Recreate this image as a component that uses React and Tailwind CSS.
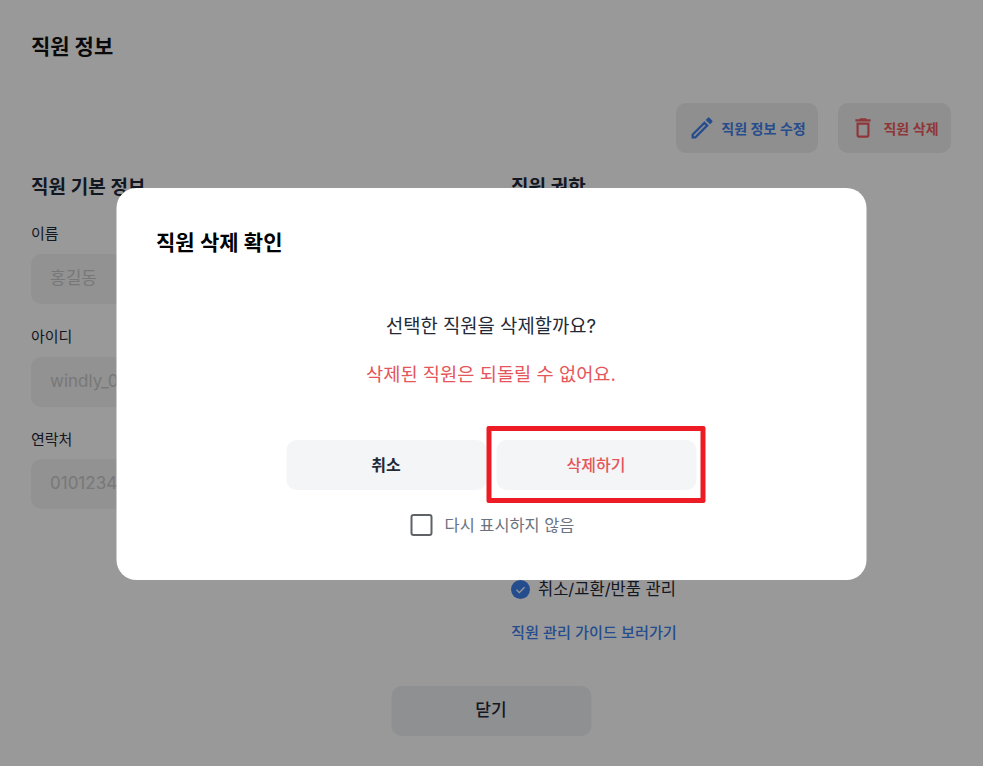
import React from "react";
import { MdOutlineEdit, MdOutlineDelete } from "react-icons/md";

const font = { fontFamily: '"Inter", "Noto Sans CJK KR", sans-serif' };

function Field({ label, value, className, gap }) {
  return (
    <div className={className}>
      <div className="h-[20px] text-[15px] leading-[20px] text-[#1f2937]">{label}</div>
      <div className={`${gap} flex h-[50px] w-[440px] items-center rounded-[10px] bg-[#f3f3f3] px-[19px] text-[17px] text-[#c8c8c8]`}>
        {value}
      </div>
    </div>
  );
}

export default function App() {
  return (
    <div style={font} className="relative h-[766px] w-[983px] overflow-hidden bg-white">
      <div className="px-[31px] pt-[33px]">
        <h1 className="h-[28px] text-[21px] font-bold leading-[28px] text-[#111]">직원 정보</h1>

        <div className="mt-[42px] flex justify-end gap-[20px] pr-[1px]">
          <button className="flex h-[50px] w-[142px] items-center justify-center gap-[5px] rounded-[10px] bg-[#eeeeee] text-[14px] font-semibold text-[#3f80ec]">
            <MdOutlineEdit className="text-[28px]" />
            직원 정보 수정
          </button>
          <button className="flex h-[50px] w-[113px] items-center justify-center gap-[7px] rounded-[10px] bg-[#eeeeee] text-[14px] font-semibold text-[#ee5a60]">
            <MdOutlineDelete className="text-[26px]" />
            직원 삭제
          </button>
        </div>

        <div className="mt-[22px] flex">
          <div className="w-[480px]">
            <h2 className="h-[26px] text-[19px] font-semibold leading-[26px] text-[#1f2937]">직원 기본 정보</h2>
            <Field label="이름" value="홍길동" className="mt-[23px]" gap="mt-[10px]" />
            <Field label="아이디" value="windly_01" className="mt-[23px]" gap="mt-[10px]" />
            <Field label="연락처" value="01012345678" className="mt-[23px]" gap="mt-[9px]" />
          </div>
          <div className="flex-1">
            <h2 className="h-[26px] text-[19px] font-semibold leading-[26px] text-[#1f2937]">직원 권한</h2>
            <div className="mt-[376px] flex h-[24px] items-center gap-[8px] text-[16.5px] text-[#1f2937]">
              <svg width="19" height="19" viewBox="0 0 19 19">
                <circle cx="9.5" cy="9.5" r="9.5" fill="#3f80ec" />
                <path d="M5.5 9.8l2.8 2.8 5.2-5.4" fill="none" stroke="#fff" strokeWidth="1.3" />
              </svg>
              취소/교환/반품 관리
            </div>
            <div className="mt-[22px] text-[15.2px] font-medium leading-[20px] text-[#3f80ec]">직원 관리 가이드 보러가기</div>
          </div>
        </div>

        <button className="mx-auto mt-[43px] block h-[50px] w-[200px] translate-x-[-0.5px] rounded-[10px] bg-[#eff1f3] text-[17px] font-medium text-[#1f2937]">
          닫기
        </button>
      </div>

      <div className="absolute inset-0 flex items-center justify-center bg-black/40">
        <div className="relative h-[392px] w-[750px] translate-x-[-0.5px] translate-y-[1px] rounded-[20px] bg-white px-[40px] pt-[41px]">
          <h3 className="h-[28px] text-[21px] font-semibold leading-[28px] text-black">직원 삭제 확인</h3>
          <p className="mt-[56px] text-center text-[18.8px] leading-[28px] text-[#1f2937]">선택한 직원을 삭제할까요?</p>
          <p className="mt-[20px] text-center text-[18.7px] leading-[28px] text-[#e5565b]">삭제된 직원은 되돌릴 수 없어요.</p>
          <div className="mt-[51px] flex justify-center gap-[10px]">
            <button className="h-[50px] w-[200px] rounded-[10px] bg-[#f3f5f7] text-[16px] font-semibold text-[#1f2937]">취소</button>
            <button className="h-[50px] w-[200px] rounded-[10px] bg-[#f3f5f7] text-[16px] font-medium text-[#e5565b]">삭제하기</button>
          </div>
          <label className="mt-[23px] flex items-center justify-center gap-[12px] pl-[3px] text-[16.4px] text-[#6b7280]">
            <span className="block h-[22px] w-[22px] rounded-[3px] border-2 border-[#5f6368]" />
            다시 표시하지 않음
          </label>
          <div className="absolute left-[370px] top-[238px] h-[77px] w-[219px] rounded-[2px] border-[5px] border-[#ed1c24]" />
        </div>
      </div>
    </div>
  );
}
